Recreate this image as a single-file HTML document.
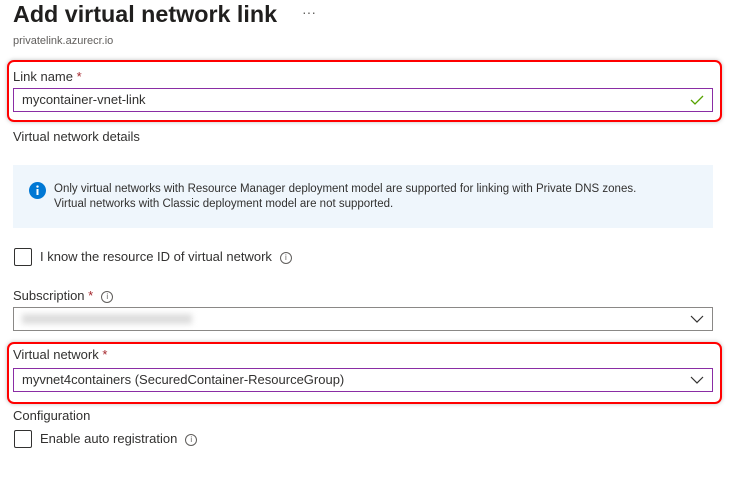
<!DOCTYPE html>
<html><head><style>
body{margin:0;width:734px;height:499px;background:#fff;font-family:"Liberation Sans",sans-serif;color:#323130;position:relative;overflow:hidden}
.a{position:absolute;white-space:nowrap}
.lbl{font-size:13px;color:#323130}
.req{color:#a4262c}
.inp{position:absolute;left:13px;width:698px;height:22px;border:1px solid #8a8886;background:#fff}
.inp.p{border-color:#8a2da5}
.inp span{position:absolute;left:8px;top:3px;font-size:13px;color:#323130}
.red{position:absolute;left:7px;width:711px;height:58px;border:2px solid #f00;border-radius:7px;box-shadow:0 0 4px rgba(0,0,0,.25)}
.cb{position:absolute;left:14px;width:16px;height:16px;border:1px solid #323130;border-radius:2px}
.ii{display:inline-block;width:10px;height:10px;border:1px solid #605e5c;border-radius:50%;font-size:8px;line-height:10px;text-align:center;color:#605e5c;vertical-align:1px;margin-left:8px}
.chev{position:absolute;right:8px;top:6px}
</style></head><body>
<div class="a" style="left:13px;top:1px;font-size:23.3px;font-weight:bold;color:#201f1e">Add virtual network link</div>
<div class="a" style="left:302px;top:4px;font-size:14px;color:#605e5c">···</div>
<div class="a" style="left:13px;top:35px;font-size:11px;color:#605e5c">privatelink.azurecr.io</div>

<div class="red" style="top:60px"></div>
<div class="a lbl" style="left:13px;top:69px">Link name <span class="req">*</span></div>
<div class="inp p" style="top:88px"><span>mycontainer-vnet-link</span>
<svg class="chev" style="top:5px" width="14" height="12" viewBox="0 0 14 12"><path d="M1 6l4 4 8-8" fill="none" stroke="#57a300" stroke-width="1.3"/></svg></div>

<div class="a lbl" style="left:13px;top:129px">Virtual network details</div>

<div class="a" style="left:13px;top:165px;width:700px;height:63px;background:#eff6fc"></div>
<svg class="a" style="left:29px;top:182px" width="17" height="17" viewBox="0 0 17 17"><circle cx="8.5" cy="8.5" r="8.5" fill="#0078d4"/><rect x="7.5" y="7" width="2" height="6" fill="#fff"/><circle cx="8.5" cy="4.6" r="1.2" fill="#fff"/></svg>
<div class="a" style="left:54px;top:182px;font-size:11.5px;line-height:15px;color:#323130">Only virtual networks with Resource Manager deployment model are supported for linking with Private DNS zones.<br>Virtual networks with Classic deployment model are not supported.</div>

<div class="cb" style="top:248px"></div>
<div class="a lbl" style="left:40px;top:249px">I know the resource ID of virtual network<span class="ii">i</span></div>

<div class="a lbl" style="left:13px;top:288px">Subscription <span class="req">*</span><span class="ii">i</span></div>
<div class="inp" style="top:307px"><div style="position:absolute;left:8px;top:6px;width:170px;height:10px;background:#ddd;filter:blur(3px)"></div>
<svg class="chev" width="14" height="10" viewBox="0 0 14 10"><path d="M1 2l6 6 6-6" fill="none" stroke="#323130" stroke-width="1.2"/></svg></div>

<div class="red" style="top:342px"></div>
<div class="a lbl" style="left:13px;top:347px">Virtual network <span class="req">*</span></div>
<div class="inp p" style="top:368px"><span>myvnet4containers (SecuredContainer-ResourceGroup)</span>
<svg class="chev" width="14" height="10" viewBox="0 0 14 10"><path d="M1 2l6 6 6-6" fill="none" stroke="#323130" stroke-width="1.2"/></svg></div>

<div class="a lbl" style="left:13px;top:408px">Configuration</div>
<div class="cb" style="top:430px"></div>
<div class="a lbl" style="left:40px;top:431px">Enable auto registration<span class="ii">i</span></div>
</body></html>
